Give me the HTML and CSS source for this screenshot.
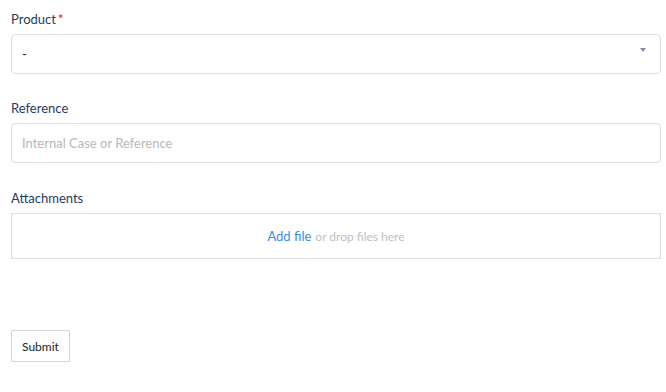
FILE: index.html
```html
<!DOCTYPE html>
<html lang="en">

<head>
    <meta charset="UTF-8" />
    <meta name="viewport" content="width=device-width, initial-scale=1.0" />
    <title>Case Form</title>
    <link rel="stylesheet" href="styles.css">
</head>

<body>
    <form class="case-form" id="caseForm">
        <!-- Product Field -->
        <div class="form-group">
            <label for="product">Product<span class="required">*</span></label>
            <div class="select-box" id="product">
                <span>-</span>
                <span class="caret"></span>
            </div>
        </div>
        <!-- Reference Field -->
        <div class="form-group">
            <label for="reference">Reference</label>
            <input type="text" id="reference" placeholder="Internal Case or Reference">
        </div>
        <!-- Attachments Field -->
        <div class="form-group">
            <label>Attachments</label>
            <div class="dropzone">
                <a href="#" class="add-file">Add file</a> or drop files here
            </div>
        </div>
        <button type="submit" class="submit-btn">Submit</button>
    </form>
</body>

</html>
```

FILE: styles.css
```css
body {
    font-family: Lato, "Open Sans", sans-serif;
    background-color: white;
    margin: 0;
    padding: 10px 5px 0 11px;
}

.form-group {
    margin-bottom: 25px;
}

.form-group label {
    display: block;
    font-size: 13px;
    line-height: 18px;
    color: #1e3d66;
    margin-bottom: 6px;
}

.required {
    color: #e02020;
    margin-left: 2px;
}

.select-box,
.form-group input {
    height: 40px;
    width: 100%;
    box-sizing: border-box;
    border: 1px solid #dddddd;
    border-radius: 4px;
    font-family: inherit;
    font-size: 13px;
    padding: 0 10px;
    color: #222;
}

.select-box {
    display: flex;
    align-items: center;
    justify-content: space-between;
}

.caret {
    width: 0;
    height: 0;
    border-left: 3px solid transparent;
    border-right: 3px solid transparent;
    border-top: 4px solid #7f8fa4;
    margin-right: 4px;
    margin-top: -8px;
}

.form-group input {
    margin-bottom: 1px;
}

.form-group input::placeholder {
    color: #b8b8b8;
}

.dropzone {
    height: 46px;
    border: 1px solid #dddddd;
    box-sizing: border-box;
    display: flex;
    align-items: center;
    justify-content: center;
    font-size: 12px;
    color: #c0c0c0;
    gap: 4px;
}

.add-file {
    color: #3b8ae6;
    text-decoration: none;
    font-size: 13px;
}

button.submit-btn {
    margin-top: 46px;
    height: 32px;
    padding: 0 10px;
    border: 1px solid #d4d4d4;
    border-radius: 2px;
    background-color: white;
    color: #222;
    font-family: inherit;
    font-size: 12px;
    box-shadow: 0 1px 1px rgba(0, 0, 0, 0.08);
    cursor: pointer;
}
```
